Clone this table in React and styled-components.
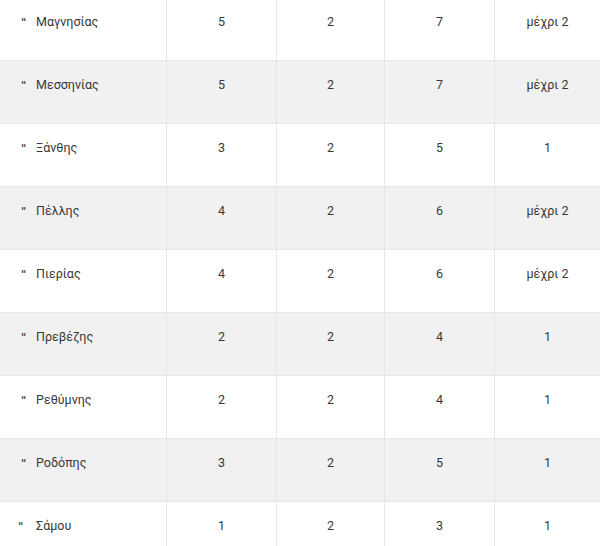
import React from 'react';
import styled, { createGlobalStyle } from 'styled-components';

const GlobalStyle = createGlobalStyle`
    html, body {
        margin: 0;
        padding: 0;
        background: #fff;
        overflow: hidden;
    }
`

const Table = styled.div`
    width: 600px;
    margin-top: -3px;
    font-family: Roboto, "Noto Sans", sans-serif;
    font-size: 12.5px;
    color: #383838;
`
const Row = styled.div`
    display: grid;
    grid-template-columns: 166px 110px 108px 110px 106px;
    height: 62px;
    background: ${props => props.$striped ? '#f1f1f1' : '#fff'};
    border-top: 1px solid #e6e6ea;
`
const Cell = styled.div`
    padding-top: 15px;
    text-align: center;
    line-height: 18px;
    border-left: 1px solid #e6e6ea;
`
const NameCell = styled.div`
    display: flex;
    align-items: flex-start;
    padding-top: 15px;
    padding-left: ${props => props.$indent}px;
    line-height: 18px;
`
const Ditto = styled.span`
    width: ${props => props.$gap}px;
    margin-top: 3px;
    font-family: "DejaVu Sans", sans-serif;
    font-size: 10px;
    font-weight: bold;
    line-height: 14px;
    color: #444;
`

const rows = [
    ['Μαγνησίας', 5, 2, 7, 'μέχρι 2'],
    ['Μεσσηνίας', 5, 2, 7, 'μέχρι 2'],
    ['Ξάνθης', 3, 2, 5, 1],
    ['Πέλλης', 4, 2, 6, 'μέχρι 2'],
    ['Πιερίας', 4, 2, 6, 'μέχρι 2'],
    ['Πρεβέζης', 2, 2, 4, 1],
    ['Ρεθύμνης', 2, 2, 4, 1],
    ['Ροδόπης', 3, 2, 5, 1],
    ['Σάμου', 1, 2, 3, 1],
]

const App = () => {
    return (
        <>
            <GlobalStyle />
            <Table>
                {rows.map((r, i) => {
                    const last = i === rows.length - 1;
                    return (
                        <Row key={r[0]} $striped={i % 2 === 1}>
                            <NameCell $indent={last ? 18 : 21}>
                                <Ditto $gap={last ? 18 : 15}>"</Ditto>
                                <span>{r[0]}</span>
                            </NameCell>
                            <Cell>{r[1]}</Cell>
                            <Cell>{r[2]}</Cell>
                            <Cell>{r[3]}</Cell>
                            <Cell>{r[4]}</Cell>
                        </Row>
                    )
                })}
            </Table>
        </>
    )
}

export default App;
